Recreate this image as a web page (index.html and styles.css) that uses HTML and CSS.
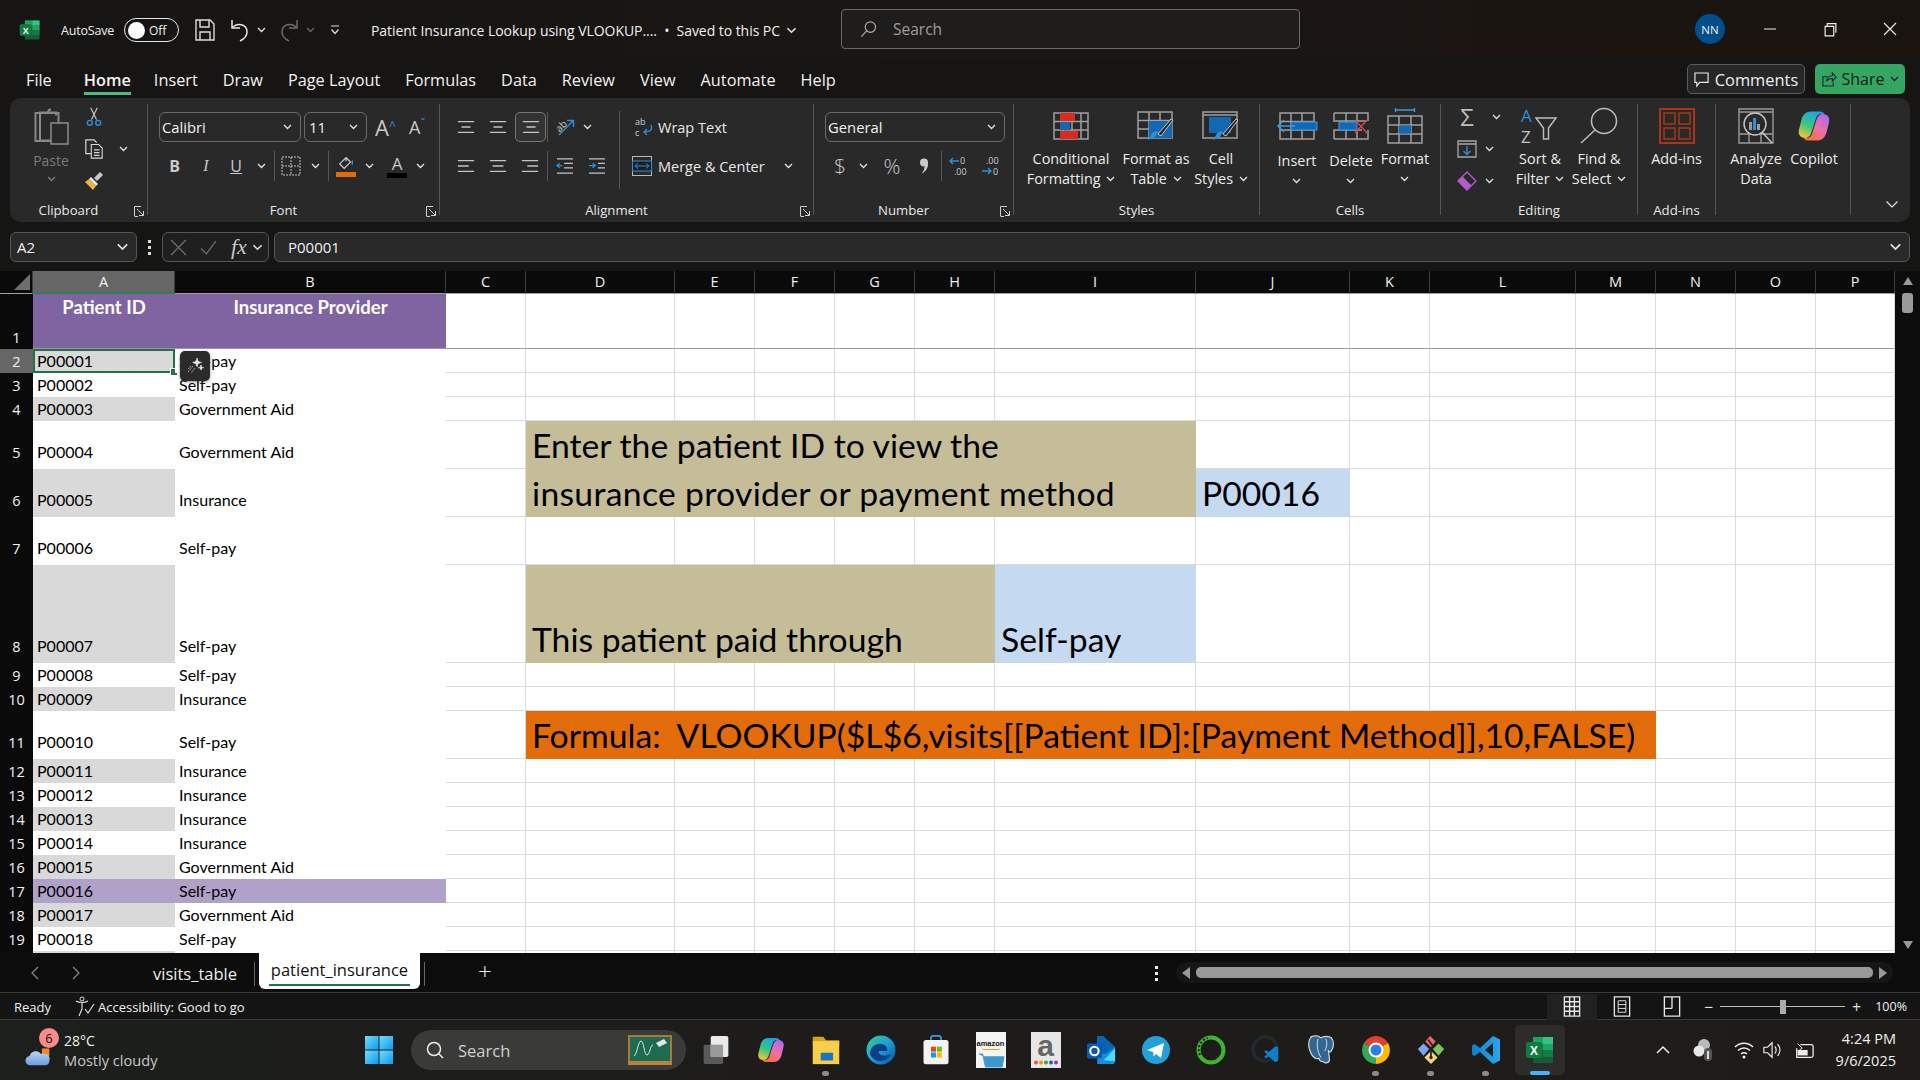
FILE: index.html
```html
<!DOCTYPE html>
<html lang="en">
<head>
<meta charset="utf-8">
<title>Patient Insurance Lookup using VLOOKUP</title>
<link rel="stylesheet" href="styles.css">
</head>
<body>
<svg class="defs" aria-hidden="true">
  <defs>
    <linearGradient id="cpA" x1=".7" y1="0" x2=".2" y2="1"><stop offset="0" stop-color="#1a9ff0"/><stop offset=".55" stop-color="#37c77f"/><stop offset="1" stop-color="#f5c63a"/></linearGradient>
    <linearGradient id="cpB" x1=".9" y1="0" x2=".3" y2="1"><stop offset="0" stop-color="#a868f2"/><stop offset=".55" stop-color="#ef6fa8"/><stop offset="1" stop-color="#f5703a"/></linearGradient>
    <linearGradient id="edge" x1="0" y1="0" x2="1" y2="1"><stop offset="0" stop-color="#37d08a"/><stop offset=".5" stop-color="#1d9fd8"/><stop offset="1" stop-color="#0c4e9c"/></linearGradient>
    <linearGradient id="win" x1="0" y1="0" x2="1" y2="1"><stop offset="0" stop-color="#6fdcfb"/><stop offset="1" stop-color="#0f9bf0"/></linearGradient>
    <linearGradient id="cloud" x1="0" y1="0" x2="0" y2="1"><stop offset="0" stop-color="#b9d2f5"/><stop offset="1" stop-color="#6f9be0"/></linearGradient>
    <linearGradient id="vs" x1="0" y1="0" x2="1" y2="0"><stop offset="0" stop-color="#0f7fcb"/><stop offset="1" stop-color="#29a5ee"/></linearGradient>
    <symbol id="chev" viewBox="0 0 9 6"><path d="M1 1l3.5 3.5L8 1" fill="none" stroke="#e4e4e4" stroke-width="1.3"/></symbol>
    <symbol id="launch" viewBox="0 0 11 11"><path d="M.5 10V.5H7M.5 10.5H4M3 3l6.5 6.5M9.5 5v4.5H5" fill="none" stroke="#cfcfcf"/></symbol>
    <symbol id="xl" viewBox="0 0 30 30"><rect x="8" y="2" width="20" height="26" rx="1.5" fill="#185c37"/><rect x="18" y="2" width="10" height="7" fill="#33c481"/><rect x="8" y="2" width="10" height="7" fill="#21a366"/><rect x="18" y="9" width="10" height="6.500" fill="#21a366"/><rect x="8" y="9" width="10" height="6.500" fill="#107c41"/><rect x="18" y="15.500" width="10" height="6.500" fill="#107c41"/><rect x="1" y="7" width="16" height="16" rx="2" fill="#107c41"/><text x="9" y="20" font-size="12" font-weight="700" text-anchor="middle" fill="#fff" font-family="Liberation Sans">X</text></symbol>
    <symbol id="copilot" viewBox="0 0 30 30"><path d="M12 3h8c2 0 3.500 1 4 3-1-1-2-1-3-1-2 0-3.500 1-4.500 4L13 20c-1 3-2.500 5-5.500 5-4 0-6-3-5-7l2-8C5.500 6 8 3 12 3z" fill="url(#cpA)"/><path d="M18 27h-8c-2 0-3.500-1-4-3 1 1 2 1 3 1 2 0 3.500-1 4.500-4L17 10c1-3 2.500-5 5.500-5 4 0 6 3 5 7l-2 8c-1 4-3.500 7-7.500 7z" fill="url(#cpB)"/></symbol>
  </defs>
</svg>

<header class="titlebar">
  <div class="qat">
    <svg class="xl-logo"><use href="#xl"/></svg>
    <span class="autosave">AutoSave</span>
    <span class="toggle"><i class="knob"></i><span>Off</span></span>
    <svg class="q-save" viewBox="0 0 20 22"><path d="M1 1h14l4 4v16H1zM5 1v7h9V1M5 21v-8h10v8" fill="none" stroke="#dcdcdc" stroke-width="1.400"/></svg>
    <svg class="q-undo" viewBox="0 0 20 24"><path d="M2 2v8h8M2 10c5-6 15-4 15 4 0 4-3 7-7 9" fill="none" stroke="#e6e6e6" stroke-width="1.500"/></svg>
    <svg class="q-chev"><use href="#chev"/></svg>
    <svg class="q-redo" viewBox="0 0 20 24"><path d="M18 2v8h-8M18 10c-5-6-15-4-15 4 0 4 3 7 7 9" fill="none" stroke="#6b6b6b" stroke-width="1.500"/></svg>
    <svg class="q-chev dim"><use href="#chev"/></svg>
    <svg class="q-more" viewBox="0 0 10 10"><path d="M1 1h8M1.500 4.500l3.500 4 3.500-4" fill="none" stroke="#e0e0e0" stroke-width="1.200"/></svg>
    <span class="doc">Patient Insurance Lookup using VLOOKUP....&nbsp; •&nbsp; Saved to this PC</span>
    <svg class="doc-chev"><use href="#chev"/></svg>
  </div>
  <div class="search">
    <svg class="s-ico" viewBox="0 0 18 18"><circle cx="11" cy="7" r="5.500" fill="none" stroke="#a8a8a8" stroke-width="1.300"/><path d="M7 11l-5.500 6" stroke="#a8a8a8" stroke-width="1.300"/></svg>
    <span>Search</span>
  </div>
  <div class="winctl">
    <span class="avatar">NN</span>
    <span class="wbtn"><svg viewBox="0 0 12 12"><path d="M0 6h12" stroke="#eee"/></svg></span>
    <span class="wbtn"><svg class="restore" viewBox="0 0 12 14"><path d="M1 4h8v9H1zM3 4V1.500h8V10" fill="none" stroke="#eee" stroke-width="1.100"/></svg></span>
    <span class="wbtn"><svg viewBox="0 0 12 12"><path d="M0 0l12 12M12 0L0 12" stroke="#eee" stroke-width="1.100"/></svg></span>
  </div>
</header>

<nav class="tabs">
  <a class="tab">File</a><a class="tab on">Home</a><a class="tab">Insert</a><a class="tab">Draw</a><a class="tab">Page Layout</a><a class="tab">Formulas</a><a class="tab">Data</a><a class="tab">Review</a><a class="tab">View</a><a class="tab">Automate</a><a class="tab">Help</a>
  <span class="comments"><svg viewBox="0 0 16 16"><path d="M1 1h14v10H6l-3 4v-4H1z" fill="none" stroke="#eee" stroke-width="1.200"/></svg>Comments</span>
  <span class="share"><svg viewBox="0 0 16 16"><path d="M6 5H1v10h11v-4M5 10c0-4 3-6 6-6V1l4 4.500L11 10V7c-3 0-5 1-6 3z" fill="none" stroke="#123" stroke-width="1.100"/></svg>Share<svg class="sh-chev" viewBox="0 0 9 6"><path d="M1 1l3.5 3.5L8 1" fill="none" stroke="#123" stroke-width="1.3"/></svg></span>
</nav>

<section class="ribbon">
  <div class="grp g-clip">
    <div class="body clip-body">
      <div class="paste">
        <svg class="paste-ico" viewBox="0 0 34 37"><path d="M17 1.500a3 3 0 0 0-3 3H6v28h10" fill="none" stroke="#8a8a8a" stroke-width="2"/><path d="M14 4.500h8v3M1 6" fill="none" stroke="#8a8a8a" stroke-width="2"/><rect x="1.500" y="5" width="23" height="28" fill="none" stroke="#888" stroke-width="2"/><rect x="17" y="15" width="17" height="21" fill="#292929" stroke="#8c8c8c" stroke-width="1.500"/></svg>
        <span class="paste-t">Paste</span>
        <svg class="c c-dim"><use href="#chev"/></svg>
      </div>
      <div class="clip-col">
        <div class="cr"><svg class="i20" viewBox="0 0 20 24"><path d="M6 1l7 14M14 1L7 15" stroke="#d0d0d0" stroke-width="1.300"/><circle cx="5" cy="19" r="3" fill="none" stroke="#2f8fd8" stroke-width="1.600"/><circle cx="15" cy="19" r="3" fill="none" stroke="#2f8fd8" stroke-width="1.600"/></svg></div>
        <div class="cr"><svg class="i20" viewBox="0 0 20 22"><path d="M7 16H1V1h9l3 3" fill="none" stroke="#d8d8d8" stroke-width="1.300"/><path d="M7 6h8l4 4v11H7z M10 12h6M10 15h6M10 18h6" fill="none" stroke="#d8d8d8" stroke-width="1.200"/></svg><svg class="c clip-c"><use href="#chev"/></svg></div>
        <div class="cr"><svg class="i20" viewBox="0 0 20 20"><path d="M1 11l8 8 3-4-7-7z" fill="#f0b23a"/><path d="M5 8l7 7 2-2-7-7z" fill="#e8e8e8"/><path d="M10 7l6-6 3 3-6 6" fill="#c8c8c8"/></svg></div>
      </div>
    </div>
    <div class="lbl launchy"><span>Clipboard</span><svg class="lch"><use href="#launch"/></svg></div>
  </div>

  <div class="grp g-font">
    <div class="body stack font-body">
      <div class="row">
        <span class="combo w142">Calibri<svg class="c"><use href="#chev"/></svg></span>
        <span class="combo w63">11<svg class="c"><use href="#chev"/></svg></span>
        <span class="grow-a">A<sup>^</sup></span>
        <span class="shrink-a">A<sup>ˇ</sup></span>
      </div>
      <div class="row">
        <span class="t w31 gl b">B</span><span class="t w32 gl it">I</span><span class="t w28 gl u">U</span><span class="t w22"><svg class="c"><use href="#chev"/></svg></span>
        <i class="vs m2"></i>
        <span class="t w32"><svg class="i20" viewBox="0 0 20 20"><path d="M1 1h18v18H1zM10 1v18M1 10h18" fill="none" stroke="#c4c4c4" stroke-dasharray="2 1"/></svg></span><span class="t w16"><svg class="c"><use href="#chev"/></svg></span>
        <i class="vs m5"></i>
        <span class="t w34 col"><svg class="i18" viewBox="0 0 20 14"><path d="M10 1L3 8l5 5 7-7zM10 1v4" fill="none" stroke="#d4d4d4" stroke-width="1.300"/><path d="M17 4v5" stroke="#2f8fd8" stroke-width="1.600"/></svg><i class="swatch orange"></i></span><span class="t w12"><svg class="c"><use href="#chev"/></svg></span>
        <span class="t w36 col m4"><span class="gl-a">A</span><i class="swatch black"></i></span><span class="t w10"><svg class="c"><use href="#chev"/></svg></span>
      </div>
    </div>
    <div class="lbl launchy"><span>Font</span><svg class="lch"><use href="#launch"/></svg></div>
  </div>

  <div class="grp g-align">
    <div class="body align-body">
      <div class="stack align-left">
        <div class="row">
          <span class="t w32"><svg class="i18" viewBox="0 0 20 16"><path d="M1 2h18M5 8h10M1 14h18" stroke="#c4c4c4" stroke-width="1.400"/></svg></span>
          <span class="t w32"><svg class="i18" viewBox="0 0 20 16"><path d="M1 2h18M5 8h10M1 14h18" stroke="#c4c4c4" stroke-width="1.400"/></svg></span>
          <span class="t w32 boxed"><svg class="i18" viewBox="0 0 20 16"><path d="M1 2h18M5 8h10M1 14h18" stroke="#c4c4c4" stroke-width="1.400"/></svg></span>
          <i class="vs m1"></i>
          <span class="t w34"><svg class="i20" viewBox="0 0 20 20"><text x="1" y="13" font-size="10" fill="#ccc" transform="rotate(-45 6 10)" font-family="Open Sans">ab</text><path d="M4 18L18 4M12 3.500h6.500V10" fill="none" stroke="#2f8fd8" stroke-width="1.400"/></svg></span>
          <span class="t w10"><svg class="c"><use href="#chev"/></svg></span>
        </div>
        <div class="row">
          <span class="t w32"><svg class="i18" viewBox="0 0 20 16"><path d="M1 2h18M1 8h12M1 14h18" stroke="#c4c4c4" stroke-width="1.400"/></svg></span>
          <span class="t w32"><svg class="i18" viewBox="0 0 20 16"><path d="M1 2h18M4 8h12M1 14h18" stroke="#c4c4c4" stroke-width="1.400"/></svg></span>
          <span class="t w32"><svg class="i18" viewBox="0 0 20 16"><path d="M1 2h18M7 8h12M1 14h18" stroke="#c4c4c4" stroke-width="1.400"/></svg></span>
          <i class="vs m1"></i>
          <span class="t w34"><svg class="i18" viewBox="0 0 20 18"><path d="M1 1h18M9 6h10M9 11h10M1 17h18" stroke="#c4c4c4" stroke-width="1.400"/><path d="M7 8.500H1M4 6L1 8.500 4 11" fill="none" stroke="#2f8fd8" stroke-width="1.500"/></svg></span>
          <span class="t w30"><svg class="i18" viewBox="0 0 20 18"><path d="M1 1h18M11 6h8M11 11h8M1 17h18" stroke="#c4c4c4" stroke-width="1.400"/><path d="M1 8.500h7M5 6l3 2.500L5 11" fill="none" stroke="#2f8fd8" stroke-width="1.500"/></svg></span>
        </div>
      </div>
      <i class="vs tall"></i>
      <div class="stack align-right">
        <div class="row"><svg class="i18 wrap-ico" viewBox="0 0 18 20"><text x="0" y="8" font-size="9" fill="#ccc" font-family="Open Sans">ab</text><text x="0" y="19" font-size="9" fill="#ccc" font-family="Open Sans">c</text><path d="M16 8c2 5-1 7-7 7M12 12l-3 3 3 3" fill="none" stroke="#2f8fd8" stroke-width="1.300"/></svg><span class="txt">Wrap Text</span></div>
        <div class="row"><svg class="i20 merge-ico" viewBox="0 0 20 20"><rect x=".5" y=".5" width="19" height="19" fill="none" stroke="#b8b8b8"/><rect x=".5" y="5" width="19" height="10" fill="#1e1e1e" stroke="#2f8fd8"/><path d="M3 10h14M6 7.500L3 10l3 2.500M14 7.500l3 2.500-3 2.500" fill="none" stroke="#2f8fd8"/></svg><span class="txt">Merge &amp; Center</span><svg class="c merge-c"><use href="#chev"/></svg></div>
      </div>
    </div>
    <div class="lbl launchy"><span>Alignment</span><svg class="lch"><use href="#launch"/></svg></div>
  </div>

  <div class="grp g-num">
    <div class="body stack num-body">
      <div class="row"><span class="combo w180">General<svg class="c"><use href="#chev"/></svg></span></div>
      <div class="row">
        <span class="t w30 gl big">$</span><span class="t w10 m3"><svg class="c"><use href="#chev"/></svg></span>
        <span class="t w42 gl big m3">%</span><span class="t w22"><svg class="comma" viewBox="0 0 10 16"><circle cx="5" cy="4.500" r="4" fill="#c9c9c9"/><path d="M9 4.500c.5 5-2 9-6.500 11 2.500-3 3-5 3-7z" fill="#c9c9c9"/></svg></span>
        <i class="vs m6"></i>
        <span class="t w34"><svg class="i20" viewBox="0 0 20 20"><path d="M10 5H1M4 2L1 5l3 3" fill="none" stroke="#2f8fd8" stroke-width="1.400"/><text x="11" y="8" font-size="9" fill="#ccc" font-family="Open Sans">0</text><text x="5" y="19" font-size="9" fill="#ccc" font-family="Open Sans">.00</text></svg></span>
        <span class="t w30"><svg class="i20" viewBox="0 0 20 20"><text x="5" y="8" font-size="9" fill="#ccc" font-family="Open Sans">.00</text><path d="M1 15h9M7 12l3 3-3 3" fill="none" stroke="#2f8fd8" stroke-width="1.400"/><text x="12" y="19" font-size="9" fill="#ccc" font-family="Open Sans">0</text></svg></span>
      </div>
    </div>
    <div class="lbl launchy"><span>Number</span><svg class="lch"><use href="#launch"/></svg></div>
  </div>

  <div class="grp g-styles">
    <div class="body bigs pl6">
      <div class="bb w102"><span class="bi"><svg class="ic36" viewBox="0 0 36 28"><path d="M1 1h34v26H1zM1 9.500h34M1 18h34M10 1v26M19 1v26M28 1v26" fill="none" stroke="#a0a0a0" stroke-width="1.500"/><rect x="7" y="1" width="15" height="8" fill="#dc2a20"/><rect x="7" y="10" width="10" height="8" fill="#1268b3"/><rect x="7" y="19" width="18" height="8" fill="#dc2a20"/></svg></span><span class="bt">Conditional<br>Formatting <svg class="c tx"><use href="#chev"/></svg></span></div>
      <div class="bb w68"><span class="bi"><svg class="ic38" viewBox="0 0 38 30"><path d="M1 1h34v26H1zM1 9.500h34M1 18h34M12 1v26M23 1v26" fill="none" stroke="#a0a0a0" stroke-width="1.500"/><rect x="12" y="10" width="23" height="17" fill="#1268b3"/><path d="M36 9L24 25l-3-2 13-15z" fill="#292929" stroke="#c8c8c8"/><path d="M22 22c-3 0-3 3-4 4-2 2-7 3-8 2 2 0 3-2 4-4s4-6 8-2z" fill="#2f8fd8"/></svg></span><span class="bt">Format as<br>Table <svg class="c tx"><use href="#chev"/></svg></span></div>
      <div class="bb w62"><span class="bi"><svg class="ic38" viewBox="0 0 38 30"><path d="M1 1h34v26H1zM1 4h34" fill="none" stroke="#a0a0a0" stroke-width="1.500"/><rect x="7" y="6" width="22" height="16" fill="#1268b3"/><path d="M36 9L24 25l-3-2 13-15z" fill="#292929" stroke="#c8c8c8"/><path d="M22 22c-3 0-3 3-4 4-2 2-7 3-8 2 2 0 3-2 4-4s4-6 8-2z" fill="#2f8fd8"/></svg></span><span class="bt">Cell<br>Styles <svg class="c tx"><use href="#chev"/></svg></span></div>
    </div>
    <div class="lbl">Styles</div>
  </div>

  <div class="grp g-cells">
    <div class="body bigs pl10">
      <div class="bb w54"><span class="bi"><svg class="ic40" viewBox="0 0 40 28"><path d="M3 1h34v26H3zM3 9.500h34M3 18h34M14 1v26M25 1v26" fill="none" stroke="#a0a0a0" stroke-width="1.500"/><rect x="14" y="10" width="26" height="8" fill="#1268b3" stroke="#3a9be0"/><path d="M18 14H2M7 8l-6 6 6 6" fill="none" stroke="#3a9be0" stroke-width="1.500"/></svg></span><span class="bt mt2">Insert<br><svg class="c"><use href="#chev"/></svg></span></div>
      <div class="bb w54"><span class="bi"><svg class="ic36" viewBox="0 0 36 28"><path d="M1 1h34v8M1 27h34v-9M1 1v8h33M1 27v-9h28M13 1v26M24 1v8M24 18v9" fill="none" stroke="#a0a0a0" stroke-width="1.500"/><rect x="6" y="10" width="18" height="8" fill="#1268b3" stroke="#3a9be0"/><path d="M22 8l12 13M34 8L22 21" stroke="#e5403a" stroke-width="1.400"/></svg></span><span class="bt mt2">Delete<br><svg class="c"><use href="#chev"/></svg></span></div>
      <div class="bb w54"><span class="bi"><svg class="ic36t" viewBox="0 0 36 36"><path d="M1 8h34v27H1zM1 17h34M1 26h34M12 8v27M24 8v27" fill="none" stroke="#a0a0a0" stroke-width="1.500"/><rect x="12" y="17.500" width="12" height="8" fill="#1268b3"/><path d="M9 2h18M8.500 0v4M27.500 0v4" stroke="#3a9be0" stroke-width="1.400"/></svg></span><span class="bt">Format<br><svg class="c"><use href="#chev"/></svg></span></div>
    </div>
    <div class="lbl">Cells</div>
  </div>

  <div class="grp g-edit">
    <div class="body bigs pl16">
      <div class="clip-col edit-col">
        <div class="cr"><span class="sigma">Σ</span><svg class="c sig-c"><use href="#chev"/></svg></div>
        <div class="cr"><svg class="i20" viewBox="0 0 20 18"><path d="M1 1h18v16H1zM1 4h18" fill="none" stroke="#a8a8a8" stroke-width="1.300"/><path d="M10 6v8M6.500 11l3.500 3.500 3.500-3.500" fill="none" stroke="#2f8fd8" stroke-width="1.400"/></svg><svg class="c ed-c"><use href="#chev"/></svg></div>
        <div class="cr"><svg class="i20" viewBox="0 0 20 20"><path d="M10 1l9 9-9 9-9-9z" fill="none" stroke="#b25ccc" stroke-width="1.400"/><path d="M1 10l4.500-4.500 9 9L10 19z" fill="#b25ccc"/></svg><svg class="c ed-c"><use href="#chev"/></svg></div>
      </div>
      <div class="bb w58"><span class="bi"><svg class="ic38t" viewBox="0 0 38 36"><text x="0" y="14" font-size="17" fill="#2f8fd8" font-family="Open Sans">A</text><text x="0" y="35" font-size="17" fill="#c4c4c4" font-family="Open Sans">Z</text><path d="M15 10h20l-7.500 10v11h-5V20z" fill="none" stroke="#bdbdbd" stroke-width="1.500"/></svg></span><span class="bt">Sort &amp;<br>Filter <svg class="c tx"><use href="#chev"/></svg></span></div>
      <div class="bb w60"><span class="bi"><svg class="ic38t" viewBox="0 0 38 36"><circle cx="24" cy="13" r="12.500" fill="none" stroke="#bdbdbd" stroke-width="1.500"/><path d="M15 22L1 35" stroke="#bdbdbd" stroke-width="1.500"/></svg></span><span class="bt">Find &amp;<br>Select <svg class="c tx"><use href="#chev"/></svg></span></div>
    </div>
    <div class="lbl">Editing</div>
  </div>

  <div class="grp g-add">
    <div class="body bigs jc">
      <div class="bb w78"><span class="bi"><svg class="ic36s" viewBox="0 0 36 36"><path d="M1 1h34v34H1z" fill="none" stroke="#a8371a" stroke-width="2"/><path d="M5 5h11v11H5zM20 5h11v11H20zM5 20h11v11H5zM20 20h11v11H20z" fill="none" stroke="#a8371a" stroke-width="1.500"/></svg></span><span class="bt">Add-ins</span></div>
    </div>
    <div class="lbl">Add-ins</div>
  </div>

  <div class="grp g-data">
    <div class="body bigs pl10">
      <div class="bb w60"><span class="bi"><svg class="ic36s" viewBox="0 0 36 36"><path d="M1 1h34v34H1zM1 4h34M1 26h34M11 26v9M23 26v9" fill="none" stroke="#9a9a9a" stroke-width="1.400"/><circle cx="17" cy="16" r="11" fill="#292929" stroke="#c8c8c8" stroke-width="1.400"/><path d="M24 24l10 11" stroke="#c8c8c8" stroke-width="1.400"/><path d="M11 14h3v8h-3zM19 16h3v6h-3z" fill="#9a9a9a"/><path d="M15 10h3v12h-3z" fill="#2f8fd8"/></svg></span><span class="bt">Analyze<br>Data</span></div>
      <div class="bb w56"><span class="bi"><svg class="copilot-big"><use href="#copilot"/></svg></span><span class="bt">Copilot</span></div>
    </div>
  </div>

  <div class="collapse"><svg viewBox="0 0 12 7"><path d="M.5.500L6 6l5.500-5.500" fill="none" stroke="#e4e4e4" stroke-width="1.200"/></svg></div>
</section>

<div class="fbar">
  <span class="fbox namebox">A2<svg class="fc"><use href="#chev"/></svg></span>
  <span class="fdots"><i></i><i></i><i></i></span>
  <span class="fbox fxbox">
    <svg class="i14" viewBox="0 0 16 16"><path d="M1 1l14 14M15 1L1 15" stroke="#6e6e6e" stroke-width="1.200"/></svg>
    <svg class="i14" viewBox="0 0 16 16"><path d="M1 9l5 5L15 2" fill="none" stroke="#6e6e6e" stroke-width="1.200"/></svg>
    <span class="fx">fx</span>
    <svg class="fc2"><use href="#chev"/></svg>
  </span>
  <span class="fbox finput">P00001<svg class="fc3"><use href="#chev"/></svg></span>
</div>

<div class="sheetwrap">
  <div class="sheetclip">
    <table class="sheet">
      <colgroup><col class="c-rh"><col class="c-a"><col class="c-b"><col class="c-c"><col class="c-d"><col class="c-80"><col class="c-80"><col class="c-80"><col class="c-80"><col class="c-i"><col class="c-j"><col class="c-80"><col class="c-l"><col class="c-80"><col class="c-80"><col class="c-80"><col class="c-p"></colgroup>
      <tr class="hd"><td class="corner"><svg viewBox="0 0 16 16"><path d="M16 0v16H0z" fill="#6e6e6e"/></svg></td><td class="hact">A</td><td>B</td><td>C</td><td>D</td><td>E</td><td>F</td><td>G</td><td>H</td><td>I</td><td>J</td><td>K</td><td>L</td><td>M</td><td>N</td><td>O</td><td>P</td></tr>
      <tr class="r55 fr"><td class="rh">1</td><td class="th">Patient ID</td><td class="th">Insurance Provider</td><td></td><td></td><td></td><td></td><td></td><td></td><td></td><td></td><td></td><td></td><td></td><td></td><td></td><td></td></tr>
      <tr class="r24"><td class="rh act">2</td><td class="ca g sel">P00001</td><td class="cb magic-host">Self-pay<span class="magic"><svg viewBox="0 0 18 18"><path d="M11 1l1.200 3.300L15.500 5.500l-3.300 1.200L11 10 9.800 6.700 6.500 5.500l3.300-1.200zM15 8l.7 2 2 .7-2 .7-.7 2-.7-2-2-.7 2-.7zM7 9l-5 6M9 11l-4 5M5 9l-3 3" fill="#e8e8e8" stroke="#e8e8e8" stroke-width=".7" stroke-dasharray="2 1"/></svg></span></td><td></td><td></td><td></td><td></td><td></td><td></td><td></td><td></td><td></td><td></td><td></td><td></td><td></td><td></td></tr>
      <tr class="r24"><td class="rh">3</td><td class="ca">P00002</td><td class="cb">Self-pay</td><td></td><td></td><td></td><td></td><td></td><td></td><td></td><td></td><td></td><td></td><td></td><td></td><td></td><td></td></tr>
      <tr class="r24"><td class="rh">4</td><td class="ca g">P00003</td><td class="cb">Government Aid</td><td></td><td></td><td></td><td></td><td></td><td></td><td></td><td></td><td></td><td></td><td></td><td></td><td></td><td></td></tr>
      <tr class="r48"><td class="rh">5</td><td class="ca">P00004</td><td class="cb">Government Aid</td><td></td><td class="tan big2" colspan="6" rowspan="2">Enter the patient ID to view the<br><span class="l2">insurance provider or payment method</span></td><td></td><td></td><td></td><td></td><td></td><td></td><td></td></tr>
      <tr class="r48"><td class="rh">6</td><td class="ca g">P00005</td><td class="cb">Insurance</td><td></td><td class="blue big2">P00016</td><td></td><td></td><td></td><td></td><td></td><td></td></tr>
      <tr class="r48"><td class="rh">7</td><td class="ca">P00006</td><td class="cb">Self-pay</td><td></td><td></td><td></td><td></td><td></td><td></td><td></td><td></td><td></td><td></td><td></td><td></td><td></td><td></td></tr>
      <tr class="r98"><td class="rh">8</td><td class="ca g">P00007</td><td class="cb">Self-pay</td><td></td><td class="tan big2" colspan="5">This patient paid through</td><td class="blue big2">Self-pay</td><td></td><td></td><td></td><td></td><td></td><td></td><td></td></tr>
      <tr class="r24"><td class="rh">9</td><td class="ca">P00008</td><td class="cb">Self-pay</td><td></td><td></td><td></td><td></td><td></td><td></td><td></td><td></td><td></td><td></td><td></td><td></td><td></td><td></td></tr>
      <tr class="r24"><td class="rh">10</td><td class="ca g">P00009</td><td class="cb">Insurance</td><td></td><td></td><td></td><td></td><td></td><td></td><td></td><td></td><td></td><td></td><td></td><td></td><td></td><td></td></tr>
      <tr class="r48"><td class="rh">11</td><td class="ca">P00010</td><td class="cb">Self-pay</td><td></td><td class="orange-c big2" colspan="10">Formula:&nbsp; VLOOKUP($L$6,visits[[Patient ID]:[Payment Method]],10,FALSE)</td><td></td><td></td><td></td></tr>
      <tr class="r24"><td class="rh">12</td><td class="ca g">P00011</td><td class="cb">Insurance</td><td></td><td></td><td></td><td></td><td></td><td></td><td></td><td></td><td></td><td></td><td></td><td></td><td></td><td></td></tr>
      <tr class="r24"><td class="rh">13</td><td class="ca">P00012</td><td class="cb">Insurance</td><td></td><td></td><td></td><td></td><td></td><td></td><td></td><td></td><td></td><td></td><td></td><td></td><td></td><td></td></tr>
      <tr class="r24"><td class="rh">14</td><td class="ca g">P00013</td><td class="cb">Insurance</td><td></td><td></td><td></td><td></td><td></td><td></td><td></td><td></td><td></td><td></td><td></td><td></td><td></td><td></td></tr>
      <tr class="r24"><td class="rh">15</td><td class="ca">P00014</td><td class="cb">Insurance</td><td></td><td></td><td></td><td></td><td></td><td></td><td></td><td></td><td></td><td></td><td></td><td></td><td></td><td></td></tr>
      <tr class="r24"><td class="rh">16</td><td class="ca g">P00015</td><td class="cb">Government Aid</td><td></td><td></td><td></td><td></td><td></td><td></td><td></td><td></td><td></td><td></td><td></td><td></td><td></td><td></td></tr>
      <tr class="r24"><td class="rh">17</td><td class="ca lil">P00016</td><td class="cb lil">Self-pay</td><td></td><td></td><td></td><td></td><td></td><td></td><td></td><td></td><td></td><td></td><td></td><td></td><td></td><td></td></tr>
      <tr class="r24"><td class="rh">18</td><td class="ca g">P00017</td><td class="cb">Government Aid</td><td></td><td></td><td></td><td></td><td></td><td></td><td></td><td></td><td></td><td></td><td></td><td></td><td></td><td></td></tr>
      <tr class="r24"><td class="rh">19</td><td class="ca">P00018</td><td class="cb">Self-pay</td><td></td><td></td><td></td><td></td><td></td><td></td><td></td><td></td><td></td><td></td><td></td><td></td><td></td><td></td></tr>
      <tr class="r24"><td class="rh"></td><td class="ca g"></td><td class="cb"></td><td></td><td></td><td></td><td></td><td></td><td></td><td></td><td></td><td></td><td></td><td></td><td></td><td></td><td></td></tr>
    </table>
  </div>
  <div class="vscroll">
    <svg class="arr" viewBox="0 0 10 8"><path d="M5 0l5 8H0z" fill="#9a9a9a"/></svg>
    <i class="vthumb"></i>
    <svg class="arr bottom" viewBox="0 0 10 8"><path d="M5 8l5-8H0z" fill="#9a9a9a"/></svg>
  </div>
</div>

<div class="sheettabs">
  <svg class="nav n1" viewBox="0 0 8 14"><path d="M7 1L1 7l6 6" fill="none" stroke="#8a8a8a" stroke-width="1.200"/></svg>
  <svg class="nav n2" viewBox="0 0 8 14"><path d="M1 1l6 6-6 6" fill="none" stroke="#8a8a8a" stroke-width="1.200"/></svg>
  <span class="st visits">visits_table</span>
  <i class="st-sep"></i>
  <span class="st active"><span>patient_insurance</span></span>
  <i class="st-sep"></i>
  <span class="plus">+</span>
  <span class="hdots"><i></i><i></i><i></i></span>
  <div class="hscroll">
    <svg class="harr" viewBox="0 0 8 12"><path d="M0 6l8-6v12z" fill="#9a9a9a"/></svg>
    <i class="hthumb"></i>
    <svg class="harr" viewBox="0 0 8 12"><path d="M8 6L0 0v12z" fill="#9a9a9a"/></svg>
  </div>
</div>

<footer class="status">
  <span class="ready">Ready</span>
  <svg class="a11y" viewBox="0 0 20 22"><circle cx="7" cy="3" r="2" fill="none" stroke="#ddd"/><path d="M1 5c3 2 9 2 12 0M7 7v6M7 13l-3 7M10 13l3 4 6-9" fill="none" stroke="#ddd" stroke-width="1.200"/></svg>
  <span class="a11y-t">Accessibility: Good to go</span>
  <span class="views">
    <span class="vw on"><svg viewBox="0 0 18 22"><path d="M1 1h16v20H1zM6.500 1v20M11.500 1v20M1 6h16M1 11h16M1 16h16" fill="none" stroke="#e8e8e8" stroke-width="1.400"/></svg></span>
    <span class="vw"><svg viewBox="0 0 18 22"><path d="M1 1h16v20H1z" fill="none" stroke="#e8e8e8" stroke-width="1.400"/><path d="M5 5h8v12H5zM5 9h8M5 13h8" fill="none" stroke="#e8e8e8"/></svg></span>
    <span class="vw"><svg viewBox="0 0 18 22"><path d="M1 1h16v20H1zM9 1v12M1 13h8" fill="none" stroke="#e8e8e8" stroke-width="1.400"/></svg></span>
  </span>
  <span class="zoomctl"><span>−</span><span class="slider"><i></i></span><span>+</span></span>
  <span class="pct100">100%</span>
</footer>

<div class="taskbar">
  <div class="weather">
    <span class="w-ico"><svg viewBox="0 0 32 26"><rect x="18" y="6" width="8" height="8" fill="#f08a24"/><path d="M6 24a5 5 0 0 1-1-10c1-5 9-7 12-2 5-2 11 2 9 7 0 3-2 5-5 5z" fill="url(#cloud)"/></svg><span class="badge">6</span></span>
    <span class="w-t"><span class="w1">28°C</span><span class="w2">Mostly cloudy</span></span>
  </div>
  <svg class="winlogo" viewBox="0 0 30 30"><rect width="14" height="14" fill="url(#win)"/><rect x="15" width="14" height="14" fill="url(#win)"/><rect y="15" width="14" height="14" fill="url(#win)"/><rect x="15" y="15" width="14" height="14" fill="url(#win)"/></svg>
  <div class="tsearch">
    <svg viewBox="0 0 18 18"><circle cx="8" cy="8" r="6.500" fill="none" stroke="#eee" stroke-width="1.500"/><path d="M13 13l4 4" stroke="#eee" stroke-width="1.500"/></svg>
    <span>Search</span>
    <svg class="board" viewBox="0 0 44 30"><rect x="1" y="1" width="42" height="26" fill="#1f6b52" stroke="#a8793a" stroke-width="2"/><rect y="26" width="44" height="4" fill="#b8843c"/><path d="M6 21c3-1 4-15 7-15s3 14 6 14 3-10 6-10" fill="none" stroke="#cfe8df"/><path d="M28 8l8-4 3 4-8 4z" fill="#e8e8e8"/></svg>
  </div>
  <div class="apps">
    <span class="app"><svg viewBox="0 0 30 34"><rect x="1" y="11" width="22" height="22" rx="2" fill="#5a5a5a"/><rect x="9" y="1" width="20" height="24" rx="2" fill="#eaeaea"/><rect x="9" y="11" width="14" height="14" fill="#9a9a9a"/></svg></span>
    <span class="app"><svg><use href="#copilot"/></svg></span>
    <span class="app dot"><svg viewBox="0 0 30 34"><path d="M0 2h12l3 4h15v6H0z" fill="#d9a018"/><rect y="7" width="30" height="26" fill="#f6d04a"/><rect x="9" y="20" width="14" height="9" rx="1" fill="#1c74c8"/></svg></span>
    <span class="app"><svg viewBox="0 0 30 30"><circle cx="15" cy="15" r="14.500" fill="url(#edge)"/><path d="M4 18C5 11 11 8 16 9c4 1 6 4 5 7h-8c-1 3 4 7 12 3-3 7-12 9-17 5-3-2-4-4-4-6z" fill="#0c3f86"/></svg></span>
    <span class="app"><svg viewBox="0 0 30 36"><path d="M9 7V4a3 3 0 0 1 3-3h6a3 3 0 0 1 3 3v3" fill="none" stroke="#2aa4ee" stroke-width="2"/><rect y="6" width="30" height="29" rx="3" fill="#f3f3f3"/><rect x="9" y="14" width="6" height="6" fill="#e8481f"/><rect x="16" y="14" width="6" height="6" fill="#7ab800"/><rect x="9" y="21" width="6" height="6" fill="#00a4ef"/><rect x="16" y="21" width="6" height="6" fill="#ffb900"/></svg></span>
    <span class="app"><span class="amz"><span>amazon</span><i></i><svg viewBox="0 0 28 16"><path d="M1 1h4l3 14h18l2-11H6" fill="#3a9ad0" stroke="#3a9ad0"/></svg></span></span>
    <span class="app"><span class="atile"><span>a</span><svg viewBox="0 0 26 5"><circle cx="3" cy="2.500" r="2" fill="#e53"/><circle cx="8" cy="2.500" r="2" fill="#e90"/><circle cx="13" cy="2.500" r="2" fill="#3a3"/><circle cx="18" cy="2.500" r="2" fill="#35c"/><circle cx="23" cy="2.500" r="2" fill="#93c"/></svg></span></span>
    <span class="app"><svg viewBox="0 0 32 32"><path d="M12 1h6l13 12v15a3 3 0 0 1-3 3H12z" fill="#1490df"/><path d="M12 1h6l13 12-10 7H12z" fill="#0364b8"/><path d="M31 14v14l-12-1 12-13z" fill="#50d9ff"/><rect x="1" y="9" width="16" height="16" rx="2" fill="#0a5ab5"/><circle cx="9" cy="17" r="4.500" fill="none" stroke="#fff" stroke-width="2.200"/></svg></span>
    <span class="app"><svg viewBox="0 0 30 30"><circle cx="15" cy="15" r="14" fill="#239fd9"/><path d="M6 15l17-7-3 15-5-4-2.500 2.500L12 17z" fill="#fff"/></svg></span>
    <span class="app"><svg viewBox="0 0 30 30"><circle cx="15" cy="15" r="12.500" fill="none" stroke="#3fb52e" stroke-width="4"/><path d="M4 20A12 12 0 0 1 12 3" fill="none" stroke="#1e1e1c" stroke-width="2" stroke-dasharray="2 2"/></svg></span>
    <span class="app"><svg viewBox="0 0 32 32"><circle cx="15" cy="15" r="13" fill="none" stroke="#1f2a33" stroke-width="3.500"/><path d="M26 12l-7 6-3-2-2 1.500 3 3-3 3 2 1.500 3-2 7 6 3-1.500V13z" fill="#0f7fcb"/></svg></span>
    <span class="app"><svg viewBox="0 0 30 32"><path d="M4 2c5-2 9-1 11 1 3-2 8-2 11 0 3 3 3 9 0 14-1 2-2 1-3 0l1 9c0 4-5 5-7 2-2 1-4-1-4-3-3 1-7-1-9-6-3-6-3-14 1-17z" fill="#336791" stroke="#d9e4ee" stroke-width="1.200"/><path d="M12 4c-2 5-1 14 3 20M20 4c2 4 1 10-1 13" fill="none" stroke="#d9e4ee"/></svg></span>
    <span class="app dot"><svg viewBox="0 0 30 30"><path d="M15 15L2.900 8A14 14 0 0 1 27.100 8z" fill="#e33e33"/><path d="M15 15L27.100 8A14 14 0 0 1 15 29z" fill="#fbbc04"/><path d="M15 15L15 29A14 14 0 0 1 2.900 8z" fill="#34a853"/><circle cx="15" cy="15" r="7.500" fill="#fff"/><circle cx="15" cy="15" r="5.500" fill="#2f7de8"/></svg></span>
    <span class="app dot"><svg viewBox="0 0 30 32"><path d="M14 1l6 6-5 6-6-6z" fill="#e8696a"/><path d="M7 9l6 6-6 7-6-7z" fill="#7ba6f5"/><path d="M23 9l6 6-6 7-6-7z" fill="#80c25a"/><path d="M15 17l7 7-7 7-7-7z" fill="#f2d777"/><path d="M12 5l6 8M15 13v11" stroke="#222" stroke-width="1.800"/><circle cx="15" cy="24" r="1.800" fill="#222"/></svg></span>
    <span class="app dot"><svg viewBox="0 0 30 30"><path d="M22 1l7 3.500v21L22 29 9 17 3.500 21 1 19.500V10.500L3.500 9 9 13z" fill="url(#vs)"/><path d="M22 8l-8 7 8 7z" fill="#1e1e1c"/></svg></span>
    <span class="app xlon"><svg viewBox="0 0 30 30"><use href="#xl"/></svg><i></i></span>
  </div>
  <div class="tray">
    <svg class="car" viewBox="0 0 14 8"><path d="M1 7l6-6 6 6" fill="none" stroke="#eee" stroke-width="1.500"/></svg>
    <svg class="t-ic cl" viewBox="0 0 20 24"><circle cx="11" cy="7" r="6" fill="#b9b9b9"/><circle cx="6" cy="13" r="5.500" fill="#e8e8e8"/><rect x="11" y="10" width="8" height="13" rx="4" fill="#555"/><rect x="14" y="13" width="2" height="8" fill="#ddd"/></svg>
    <svg class="t-ic wf" viewBox="0 0 20 20"><path d="M1 7c5-5 13-5 18 0M4 10.500c3.500-3.500 8.500-3.500 12 0M7 14c1.700-1.700 4.300-1.700 6 0" fill="none" stroke="#eee" stroke-width="1.500"/><circle cx="10" cy="17" r="1.500" fill="#eee"/></svg>
    <svg class="t-ic sp" viewBox="0 0 22 20"><path d="M1 7v6h4l5 5V2L5 7z" fill="none" stroke="#eee" stroke-width="1.300"/><path d="M13 6c2 2 2 6 0 8M16 3.500c3.500 3.500 3.500 9.500 0 13" fill="none" stroke="#eee" stroke-width="1.300"/></svg>
    <svg class="t-ic bt2" viewBox="0 0 22 20"><path d="M7 4h12a2 2 0 0 1 2 2v10a2 2 0 0 1-2 2H3V8" fill="none" stroke="#eee" stroke-width="1.400"/><path d="M4 3l5 5-3 2 3 4" fill="none" stroke="#eee"/><rect x="4" y="10" width="11" height="6" fill="#eee"/></svg>
    <span class="clock"><span>4:24 PM</span><span>9/6/2025</span></span>
  </div>
</div>
</body>
</html>
```
FILE: styles.css
```css
*{box-sizing:border-box}
html,body{margin:0;padding:0}
body{width:1920px;height:1080px;overflow:hidden;background:#171513;color:#f0f0f0;font-family:"Open Sans","Noto Sans",sans-serif;font-size:13px;display:flex;flex-direction:column}
svg{display:block;flex:none;overflow:visible}
.defs{position:absolute;width:0;height:0}
i{font-style:normal}

/* title bar */
.titlebar{height:58px;flex:none;display:flex;align-items:center;background:linear-gradient(90deg,#161513,#1a1613 60%,#1a1410)}
.qat{width:841px;flex:none;display:flex;align-items:center;padding-left:19px;padding-top:2px}
.xl-logo{width:22px;height:22px}
.autosave{margin-left:20px;width:59px;font-size:12.500px;letter-spacing:-.2px;white-space:nowrap}
.toggle{margin-left:4px;width:55px;height:24px;border:1.500px solid #e6e6e6;border-radius:12px;display:flex;align-items:center;padding-left:3px;font-size:12px;gap:4px}
.knob{width:17px;height:17px;border-radius:50%;background:#fff}
.q-save{margin-left:16px;width:20px;height:22px}
.q-undo{margin-left:15px;width:20px;height:24px}
.q-chev{width:9px;height:6px;margin-left:7px}
.q-chev.dim{opacity:.4}
.q-redo{margin-left:13px;width:20px;height:24px}
.q-more{margin-left:15px;width:10px;height:10px}
.doc{margin-left:31px;font-size:14px;letter-spacing:-.05px;white-space:nowrap}
.doc-chev{width:11px;height:7px;margin-left:6px}
.search{width:459px;height:40px;flex:none;border:1px solid #6a6a6a;border-radius:4px;background:#1e1d1c;display:flex;align-items:center;padding-left:18px;gap:16px;color:#9e9e9e;font-size:15.500px;margin-top:0}
.s-ico{width:17px;height:18px}
.winctl{flex:1;display:flex;justify-content:flex-end;align-items:center}
.avatar{width:30px;height:30px;border-radius:50%;background:#004e8c;display:flex;align-items:center;justify-content:center;font-size:11.500px;margin-right:15px}
.wbtn{width:60px;display:flex;justify-content:center}
.wbtn svg{width:12px;height:12px}
.wbtn svg.restore{width:13px;height:15px}

/* tabs */
.tabs{height:40px;flex:none;display:flex;padding-left:26px;gap:25px;background:#171513}
.tab{height:37px;padding-top:11px;line-height:22px;font-size:16.300px;color:#f2f2f2;border-bottom:3px solid transparent;white-space:nowrap}
.tab.on{font-weight:600;border-bottom-color:#4fb87a;margin-left:7px;margin-right:-2px}
.comments{margin-left:auto;margin-top:6px;width:118px;height:30px;border:1px solid #5c5c5c;border-radius:5px;background:#272727;display:flex;align-items:center;justify-content:center;gap:6px;font-size:16.400px}
.comments svg{width:15px;height:15px}
.share{margin:6px 15px 0 -15px;width:90px;height:30px;border-radius:5px;background:#34a661;display:flex;align-items:center;justify-content:center;gap:5px;font-size:16px;color:#0f1f16}
.share svg{width:15px;height:15px}
.share .sh-chev{width:9px;height:6px}

/* ribbon */
.ribbon{height:124px;flex:none;margin:0 10px;background:#292929;border-radius:10px;display:flex;padding-top:6px}
.grp{height:111px;flex:none;display:flex;flex-direction:column;border-right:1px solid #555}
.g-clip{width:138px}.g-font{width:292px}.g-align{width:374px}.g-num{width:200px}.g-styles{width:246px}.g-cells{width:181px}.g-edit{width:197px}.g-add{width:78px}.g-data{width:135px}
.body{height:100px;flex:none}
.lbl{height:12px;line-height:12px;font-size:13.200px;color:#e8e8e8;text-align:center;display:flex;justify-content:center;white-space:nowrap}
.launchy span{flex:1;text-align:center}
.lch{width:11px;height:11px;margin:2px 2px 0 7px}
.collapse{flex:1;display:flex;justify-content:flex-end;align-items:flex-end;padding:0 12px 14px 0}
.collapse svg{width:12px;height:7px}
.c{width:9px;height:6px}
.c.tx{display:inline-block;vertical-align:2px;margin-left:2px}
.c-dim{opacity:.45}

.clip-body{display:flex}
.paste{width:54px;margin-left:14px;padding-top:4px;display:flex;flex-direction:column;align-items:center}
.paste-ico{width:34px;height:37px}
.paste-t{margin-top:6px;line-height:20px;color:#7a7a7a;font-size:14px}
.paste .c{margin-top:5px}
.clip-col{margin-left:6px;padding-top:1px;display:flex;flex-direction:column;gap:8px}
.cr{height:24px;display:flex;align-items:center}
.clip-c{margin-left:15px}
.i20{width:20px;height:20px}
.i18{width:18px;height:16px}
.i14{width:17px;height:17px}
.stack{display:flex;flex-direction:column;gap:9px;padding-top:8px}
.row{height:30px;display:flex;align-items:center}
.font-body{padding-left:11px}
.combo{height:30px;border:1px solid #6a6a6a;border-radius:6px;display:flex;align-items:center;justify-content:space-between;padding:0 8px 0 2px;font-size:14.800px;color:#f2f2f2}
.w142{width:142px;margin-right:3px}.w63{width:63px}.w180{width:180px}
.w63{padding-left:4px}
.grow-a{margin-left:8px;width:34px;font-size:22px;color:#c8c8c8;line-height:1;white-space:nowrap}
.shrink-a{width:24px;font-size:18px;color:#c8c8c8;line-height:1;white-space:nowrap}
.grow-a sup,.shrink-a sup{font-size:12px;color:#2f8fd8;vertical-align:6px;line-height:0}
.t{display:flex;align-items:center;justify-content:center;height:30px;flex:none}
.t.col{flex-direction:column;gap:1px}
.w10{width:10px}.w12{width:12px}.w16{width:16px}.w22{width:22px}.w28{width:28px}.w30{width:30px}.w31{width:31px}.w32{width:32px}.w34{width:34px}.w36{width:36px}.w42{width:42px}
.gl{color:#c9c9c9;font-size:16px}
.b{font-weight:700}.it{font-style:italic;font-family:"Liberation Serif",serif}.u{text-decoration:underline}
.gl-a{font-size:17px;line-height:17px;color:#c9c9c9}
.swatch{width:20px;height:5px;display:block}
.orange{background:#e26b0a}.black{background:#000}
.vs{width:1px;height:30px;background:#555;flex:none}
.m1{margin-left:1px}.m2{margin-left:2px}.m3{margin-left:3px}.m4{margin-left:4px}.m5{margin-left:5px}.m6{margin-left:6px}
.vs.tall{height:78px;margin:7px 0 0 7px}
.align-body{display:flex;padding-left:10px}
.align-left{width:162px;flex:none}
.boxed{border:1px solid #767676;border-radius:5px;background:#333;width:31px;margin-left:1px}
.align-right{flex:1}
.align-right .row{padding-left:15px}
.wrap-ico{width:18px;height:20px;margin-right:5px}
.merge-ico{margin-left:-3px;margin-right:6px}
.txt{font-size:14.500px;color:#e8e8e8;white-space:nowrap}
.merge-c{margin-left:19px}
.num-body{padding-left:11px}
.big{font-size:21px;font-weight:300}
.comma{width:10px;height:16px}
.bigs{display:flex;padding-top:4px}
.pl6{padding-left:6px}.pl10{padding-left:10px}.pl16{padding-left:16px}.jc{justify-content:center}
.bb{display:flex;flex-direction:column;align-items:center;flex:none}
.w54{width:54px}.w56{width:56px}.w58{width:58px}.w60{width:60px}.w62{width:62px}.w68{width:68px}.w78{width:78px}.w102{width:102px}
.bi{height:36px;display:flex;align-items:center;justify-content:center}
.bt{margin-top:5px;line-height:20px;font-size:14.400px;text-align:center;color:#ececec;white-space:nowrap}
.bt .c:not(.tx){margin:7px auto 0}
.mt2{margin-top:7px}
.ic36{width:36px;height:28px}.ic38{width:38px;height:30px}.ic40{width:40px;height:28px}.ic36t{width:36px;height:36px}.ic38t{width:38px;height:36px}.ic36s{width:36px;height:36px}
.copilot-big{width:38px;height:36px}
.edit-col{margin:-4px 0 0;width:54px}
.sigma{width:20px;font-size:24px;line-height:24px;color:#bdbdbd;text-align:center}
.sig-c{margin-left:15px}.ed-c{margin-left:8px}

/* formula bar */
.fbar{height:49px;flex:none;padding:10px 10px 0;display:flex;gap:0;background:#151513}
.fbox{height:30px;border:1px solid #575757;border-radius:6px;background:#292929;display:flex;align-items:center;font-size:15px}
.namebox{width:127px;padding:0 7px 0 6px;justify-content:space-between}
.fc{width:13px;height:8px}
.fdots{width:25px;height:30px;display:flex;flex-direction:column;align-items:center;justify-content:center;gap:3px}
.fdots i{width:3px;height:3px;background:#ddd}
.fxbox{width:107px;padding-left:7px;gap:13px;background:#1f1f1f}
.fx{font:italic 400 22px "Liberation Serif",serif;color:#c8c8c8;margin-left:1px;width:16px}
.fc2{width:11px;height:7px;margin-left:-8px}
.finput{margin-left:5px;flex:1;padding:0 7px 0 13px;justify-content:space-between}
.fc3{width:13px;height:8px}

/* sheet */
.sheetwrap{height:682px;flex:none;display:flex;background:#fff}
.sheetclip{width:1895px;height:682px;overflow:hidden;flex:none}
.sheet{table-layout:fixed;width:1895px;border-collapse:separate;border-spacing:0;font-family:Lato,"Liberation Sans",sans-serif;font-size:16px;color:#000;background:#fff}
.c-rh{width:33px}.c-a{width:142px}.c-b{width:271px}.c-c{width:80px}.c-d{width:149px}.c-80{width:80px}.c-i{width:201px}.c-j{width:154px}.c-l{width:146px}.c-p{width:79px}
.sheet td{padding:0 3px;border-right:1px solid #dcdcdc;border-bottom:1px solid #dcdcdc;vertical-align:bottom;line-height:21px;white-space:nowrap;overflow:visible}
.hd{height:23px}
.sheet .hd td{background:#0a0a0a;color:#f2f2f2;font-family:"Open Sans",sans-serif;font-size:14.500px;text-align:center;vertical-align:middle;border-right:1px solid #3c3c3c;border-bottom:1px solid #a0a0a0;line-height:20px;padding:0}
.sheet .hd td.hact{background:#666;border-bottom:2px solid #2f7d52}
.sheet .hd td.corner{padding:0 2px 0 14px}
.corner svg{width:16px;height:16px}
.r24{height:24px}.r48{height:48px}.r55{height:55px}.r98{height:98px}
.sheet td.rh{background:#0a0a0a;color:#f2f2f2;font-family:"Open Sans",sans-serif;font-size:14.500px;text-align:center;border:0;padding:0;line-height:22px}
.sheet td.rh.act{background:#666}
.sheet td.ca,.sheet td.cb{border:0;background:#fff;padding-left:4px;padding-bottom:2px}
.sheet .r48 td.rh,.sheet .r98 td.rh{padding-bottom:5px}
.sheet .r48 td.ca,.sheet .r48 td.cb,.sheet .r98 td.ca,.sheet .r98 td.cb{padding-bottom:7px}
.sheet td.g{background:#d9d9d9}
.sheet td.lil{background:#b1a0c7}
.sheet td.th{background:#8064a2;color:#fff;font-weight:700;font-size:18.500px;text-align:center;vertical-align:top;padding-top:3px;border-right:0}
.sheet .fr td{border-bottom:1px solid #9a9a9a}
.sheet .fr td.rh{border-bottom:0}
.sheet td.sel{position:relative;outline:2px solid #217346;outline-offset:-2px}
.sheet td.sel::after{content:"";position:absolute;right:-3px;bottom:-3px;width:6px;height:6px;background:#217346;border:1px solid #fff}
.magic-host{position:relative}
.magic{position:absolute;left:5px;top:2px;width:30px;height:30px;border-radius:5px;background:#2b2b2b;display:flex;align-items:center;justify-content:center;box-shadow:0 1px 3px rgba(0,0,0,.45);z-index:2}
.magic svg{width:18px;height:18px}
.sheet td.tan{background:#c4bd97;border:0}
.sheet td.blue{background:#c5d9f1;border:0}
.sheet td.orange-c{background:#e26b0a;border:0}
.sheet td.big2{font-size:33.700px;line-height:48px;padding-left:6px}
.l2{letter-spacing:.3px}
.vscroll{width:25px;flex:none;background:#0c0c0c;display:flex;flex-direction:column;align-items:center;padding:6px 0 4px}
.arr{width:10px;height:8px}
.arr.bottom{margin-top:auto}
.vthumb{width:11px;height:20px;border-radius:3px;background:#9a9a9a;margin-top:8px}

/* sheet tabs */
.sheettabs{height:40px;flex:none;background:#0c0c0c;display:flex;align-items:flex-start;border-bottom:1px solid #3a3a3a}
.nav{width:8px;height:14px;margin-top:13px}
.n1{margin-left:31px}.n2{margin-left:33px}
.st{font-size:16.500px;white-space:nowrap}
.visits{margin-left:73px;margin-top:9px;width:101px;color:#eee;line-height:24px}
.st-sep{width:1px;height:24px;background:#666;margin-top:9px}
.active{margin:0 4px;width:161px;height:36px;background:#fff;color:#111;border-radius:0 0 6px 6px;padding:0 10px;font-weight:500}
.active span{display:block;height:33px;line-height:33px;border-bottom:2px solid #217346;text-align:center}
.plus{margin-left:53px;font-size:24px;line-height:36px;color:#eee;font-weight:300}
.hdots{margin-left:663px;margin-top:13px;display:flex;flex-direction:column;gap:3px}
.hdots i{width:3px;height:3px;background:#eee}
.hscroll{margin-left:18px;margin-top:9px;width:717px;height:21px;border-radius:10px;background:#161616;display:flex;align-items:center;padding:0 6px;gap:6px}
.harr{width:8px;height:12px}
.hthumb{flex:1;height:11px;border-radius:5px;background:#999}

/* status */
.status{height:27px;flex:none;background:#141414;display:flex;align-items:center;padding:1px 0 0 14px;font-size:13px;border-bottom:1px solid #3a3a3a}
.ready{width:61px}
.a11y{width:20px;height:22px}
.a11y-t{margin-left:3px;white-space:nowrap}
.views{margin-left:auto;display:flex;align-items:center;height:26px}
.vw{width:50px;height:26px;display:flex;align-items:center;justify-content:center}
.vw.on{background:#212121}
.vw svg{width:18px;height:21px}
.zoomctl{margin-left:7px;display:flex;align-items:center;gap:5px;font-size:16px;color:#e0e0e0}
.slider{width:125px;height:1px;background:#bbb;display:flex;justify-content:center;margin:0 2px;align-items:center}
.slider i{width:6px;height:14px;background:#aaa;flex:none}
.pct100{margin:0 13px 0 14px;font-size:12.500px}

/* taskbar */
.taskbar{flex:1;background:linear-gradient(90deg,#1c1f1c,#1d1c1a 40%,#1f1b18);display:flex;align-items:center}
.weather{width:365px;flex:none;display:flex;align-items:center;padding-left:25px;gap:9px}
.w-ico{width:30px;height:40px;display:flex;align-items:flex-end;position:relative}
.w-ico svg{width:30px;height:26px;margin-bottom:2px}
.badge{position:absolute;left:14px;top:-2px;width:20px;height:20px;border-radius:50%;background:#f98b8b;color:#111;font-size:13px;text-align:center;line-height:20px}
.w-t{display:flex;flex-direction:column;line-height:20px}
.w1{font-size:14px}.w2{font-size:14.600px;color:#c8c8c8;margin-top:-1px}
.winlogo{width:29px;height:29px}
.tsearch{margin-left:17px;width:275px;height:40px;border-radius:20px;background:#3a3a38;display:flex;align-items:center;padding-left:15px;gap:14px;font-size:16.500px;color:#d0d0d0}
.tsearch svg{width:18px;height:18px}
.tsearch svg.board{width:44px;height:30px;margin-left:auto;margin-right:14px}
.apps{margin-left:2px;display:flex;align-items:center}
.app{width:55px;height:50px;display:flex;align-items:center;justify-content:center;position:relative}
.app svg{width:30px;height:30px}
.app.dot::after{content:"";position:absolute;bottom:-1px;left:24px;width:7px;height:5px;border-radius:3px;background:#8a8a8a}
.xlon{width:50px;margin-left:2px;background:#2c2c2a;border-radius:5px}
.xlon i{position:absolute;bottom:0;left:15px;width:20px;height:4px;border-radius:2px;background:#3db4ff}
.amz{width:30px;height:36px;background:#f4f4f4;display:flex;flex-direction:column;align-items:center;color:#111;font:700 7.500px "Liberation Sans",sans-serif;padding-top:7px}
.amz i{width:18px;height:3px;border-bottom:1.500px solid #f90;border-radius:0 0 9px 9px}
.app .amz svg{width:26px;height:15px;margin-top:3px}
.atile{width:30px;height:36px;background:#e6e6e6;display:flex;flex-direction:column;align-items:center;color:#666;font:700 30px/28px "Liberation Sans",sans-serif}
.app .atile svg{width:26px;height:5px}
.tray{flex:1;display:flex;align-items:center;padding-right:24px}
.car{width:14px;height:8px;margin-left:91px}
.t-ic{width:20px;height:20px}
.cl{margin-left:23px;height:24px}
.wf{margin-left:21px}
.sp{margin-left:9px}
.bt2{margin-left:11px}
.clock{margin-left:auto;display:flex;flex-direction:column;align-items:flex-end;line-height:22px;font-size:14.500px}
```
